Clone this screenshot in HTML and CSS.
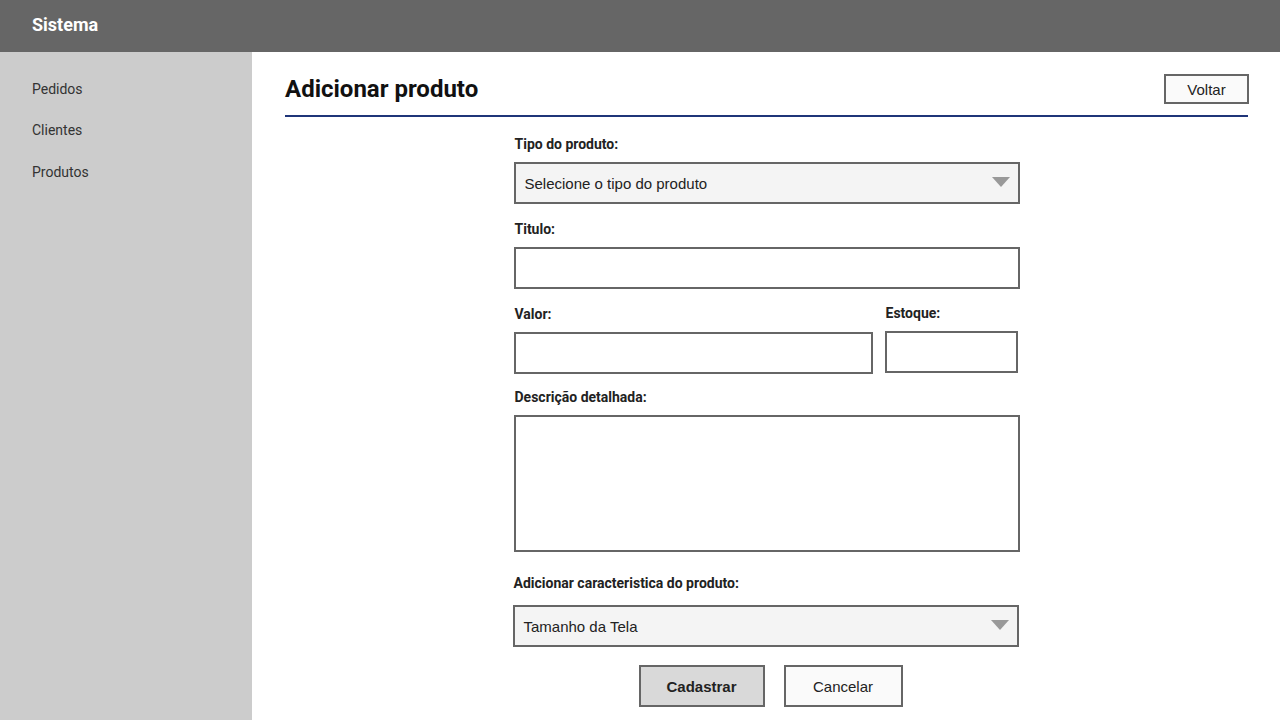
FILE: index.html
```html
<!DOCTYPE html>
<html lang="pt-BR">
<head>
<meta charset="utf-8">
<title>Sistema</title>
<link rel="stylesheet" href="styles.css">
</head>
<body>
<header class="topbar">Sistema</header>
<div class="layout">
  <nav class="sidebar">
    <a class="nav-item">Pedidos</a>
    <a class="nav-item">Clientes</a>
    <a class="nav-item">Produtos</a>
  </nav>
  <main class="main">
    <div class="page-head">
      <h1 class="page-title">Adicionar produto</h1>
      <button class="btn btn-back">Voltar</button>
    </div>
    <form class="form">
      <div class="field">
        <label class="label">Tipo do produto:</label>
        <div class="box select"><span>Selecione o tipo do produto</span><svg class="arrow" width="18" height="10" viewBox="0 0 18 10"><polygon points="0,0 18,0 9,10" fill="#999"/></svg></div>
      </div>
      <div class="field">
        <label class="label">Titulo:</label>
        <div class="box"></div>
      </div>
      <div class="row">
        <div class="field field-tight">
          <label class="label">Valor:</label>
          <div class="box"></div>
        </div>
        <div class="field field-tight field-up">
          <label class="label">Estoque:</label>
          <div class="box"></div>
        </div>
      </div>
      <div class="field">
        <label class="label">Descrição detalhada:</label>
        <div class="box textarea"></div>
      </div>
      <div class="field field-feature">
        <label class="label">Adicionar caracteristica do produto:</label>
        <div class="box select"><span>Tamanho da Tela</span><svg class="arrow" width="18" height="10" viewBox="0 0 18 10"><polygon points="0,0 18,0 9,10" fill="#999"/></svg></div>
      </div>
      <div class="actions">
        <button type="button" class="btn btn-primary">Cadastrar</button>
        <button type="button" class="btn btn-cancel">Cancelar</button>
      </div>
    </form>
  </main>
</div>
</body>
</html>
```
FILE: styles.css
```css
* { box-sizing: border-box; }
html, body { margin: 0; padding: 0; }
body {
  width: 1280px;
  height: 720px;
  overflow: hidden;
  font-family: Roboto, "Liberation Sans", sans-serif;
  background: #fff;
}
.topbar {
  height: 52px;
  background: #666666;
  color: #fff;
  font-weight: 700;
  font-size: 18px;
  line-height: 50px;
  padding-left: 32px;
}
.layout {
  display: flex;
  height: 668px;
}
.sidebar {
  width: 252px;
  flex: none;
  background: #cccccc;
  padding-top: 16.5px;
  display: flex;
  flex-direction: column;
}
.nav-item {
  padding-left: 32px;
  font-size: 14px;
  line-height: 41.5px;
  color: #333;
}
.main {
  flex: 1;
  padding: 22px 32px 0 33px;
}
.page-head {
  display: flex;
  justify-content: space-between;
  align-items: center;
  padding-bottom: 11px;
  border-bottom: 2px solid #1f3579;
}
.page-title {
  margin: 0;
  font-size: 24px;
  font-weight: 700;
  color: #111;
  line-height: 30px;
}
.btn {
  font-family: "Liberation Sans", Arial, sans-serif;
  font-size: 15px;
  color: #222;
  border: 2px solid #666;
  background: #fafafa;
  padding: 0;
  cursor: pointer;
}
.btn-back {
  width: 85px;
  height: 30px;
  margin-right: -1px;
}
.form {
  width: 506px;
  margin: 19px auto 0;
}
.field { margin-bottom: 17px; }
.label {
  display: block;
  font-size: 14px;
  font-weight: 700;
  color: #222;
  line-height: 16px;
  margin-bottom: 10px;
  padding-left: 1px;
}
.box {
  height: 42px;
  border: 2px solid #666;
  background: #fff;
}
.select {
  background: #f4f4f4;
  display: flex;
  align-items: center;
  justify-content: space-between;
  padding: 0 8px 0 9px;
  font-family: "Liberation Sans", Arial, sans-serif;
  font-size: 15px;
  color: #222;
}
.arrow { display: block; margin-top: -2px; }
.row {
  display: grid;
  grid-template-columns: 359px 133px;
  column-gap: 12px;
}
.field-tight { margin-bottom: 15px; }
.field-up { margin-top: -1px; }
.textarea { height: 137px; }
.field-feature {
  margin-top: 23px;
  margin-left: -1px;
  margin-right: 1px;
  margin-bottom: 18px;
}
.field-feature .label { margin-bottom: 14px; }
.actions {
  display: flex;
  justify-content: center;
  gap: 19px;
  padding-left: 8px;
}
.btn-primary {
  width: 126px;
  height: 42px;
  background: #d9d9d9;
  font-weight: 700;
}
.btn-cancel {
  width: 119px;
  height: 42px;
}
```
